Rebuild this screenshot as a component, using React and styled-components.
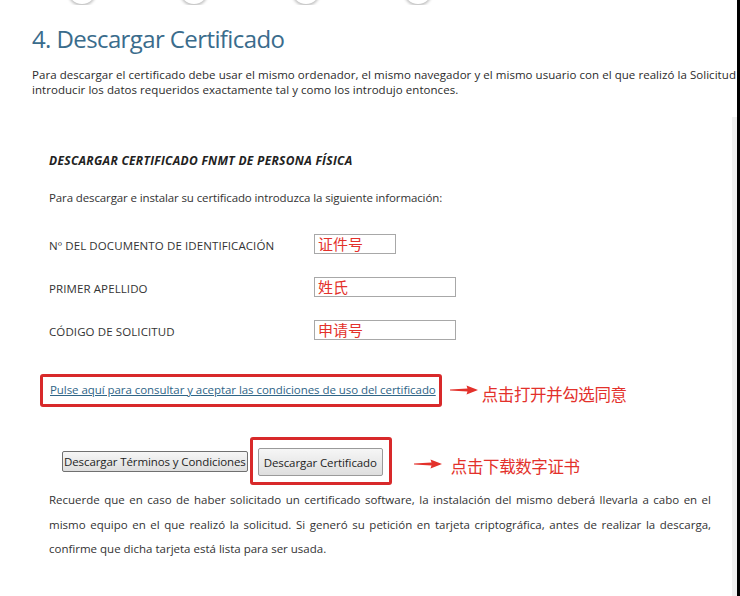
import React from "react";
import styled, { createGlobalStyle } from "styled-components";

const Global = createGlobalStyle`
  html, body { margin: 0; padding: 0; background: #fff; }
  body { font-family: "Open Sans", "Noto Sans", sans-serif; }
`;

const Page = styled.div`
  width: 740px;
  height: 596px;
  overflow: hidden;
  display: flex;
  background: #fff;
`;

const Main = styled.div`
  flex: 1;
  min-width: 0;
  display: flex;
  flex-direction: column;
`;

const Edge = styled.div`
  width: 8px;
  display: flex;
`;
const EdgeLight = styled.div`
  width: 5px;
  margin-top: 117px;
  background: #f0f0f0;
`;
const EdgeDark = styled.div`
  width: 3px;
  background: #000;
`;

const Steps = styled.div`
  display: flex;
  gap: 84px;
  padding-left: 68px;
  height: 5px;
  overflow: hidden;
`;
const StepDot = styled.div`
  width: 28px;
  height: 28px;
  margin-top: -24px;
  border-radius: 50%;
  background: #fff;
  box-shadow: 0 2px 3px rgba(0, 0, 0, 0.25);
`;

const Heading = styled.h1`
  margin: 17px 0 0 32px;
  font-weight: 400;
  font-size: 24px;
  line-height: 34px;
  color: #3a6c8c;
  letter-spacing: -0.6px;
`;

const Intro = styled.p`
  margin: 11px 0 0 32px;
  font-size: 11.5px;
  line-height: 15px;
  color: #2b2b2b;
  white-space: nowrap;
  letter-spacing: 0.05px;
`;

const Form = styled.div`
  margin: 56px 0 0 49px;
  display: flex;
  flex-direction: column;
`;

const SectionTitle = styled.div`
  font-size: 12px;
  font-weight: 700;
  font-style: italic;
  color: #222;
  line-height: 16px;
  letter-spacing: 0.3px;
`;

const Hint = styled.div`
  margin-top: 21px;
  font-size: 11.5px;
  color: #333;
  line-height: 16px;
  letter-spacing: -0.12px;
`;

const Fields = styled.div`
  margin-top: 28px;
  display: grid;
  grid-template-columns: 265px auto;
  row-gap: 23px;
  align-items: center;
`;

const Label = styled.div`
  font-size: 11.5px;
  color: #333;
  letter-spacing: 0.1px;
  padding-top: 3px;
`;

const Input = styled.div`
  width: ${(p) => p.$w}px;
  height: 18px;
  border: 1px solid #a8a8a8;
  background: #fff;
  box-sizing: content-box;
  padding-left: 3px;
  display: flex;
  align-items: center;
  font-family: "Noto Sans CJK SC", sans-serif;
  font-size: 15px;
  color: #e3312b;
  line-height: 18px;
`;

const LinkRow = styled.div`
  margin: 34px 0 0 -9px;
  display: flex;
  align-items: center;
`;

const RedBox = styled.div`
  border: 3px solid #d8292a;
  border-radius: 3px;
  padding: ${(p) => p.$pad};
  margin-left: ${(p) => p.$ml || 0}px;
  display: flex;
  align-items: center;
`;

const Link = styled.a`
  font-size: 11.5px;
  color: #2f6587;
  text-decoration: underline;
  letter-spacing: -0.06px;
  line-height: 16px;
  white-space: nowrap;
`;

const Note = styled.span`
  font-family: "Noto Sans CJK SC", sans-serif;
  font-size: 16.5px;
  color: #e3312b;
  letter-spacing: -0.4px;
  line-height: 20px;
  margin-top: ${(p) => p.$dy || 0}px;
`;

const Arrow = styled.svg`
  display: block;
  flex: none;
  margin: ${(p) => p.$m};
`;

const ButtonRow = styled.div`
  margin: 30px 0 0 13px;
  display: flex;
  align-items: center;
`;

const Button = styled.button`
  font-family: "Open Sans", sans-serif;
  font-size: 11.5px;
  letter-spacing: -0.1px;
  color: #1e1e1e;
  background: linear-gradient(#f6f6f6, #dedede);
  border: 1px solid ${(p) => (p.$big ? "#9a9a9a" : "#707070")};
  border-radius: 2px;
  padding: 0 ${(p) => (p.$big ? 5 : 1)}px;
  height: ${(p) => (p.$big ? 28 : 21)}px;
  white-space: nowrap;
  margin: 0;
`;

const Footer = styled.p`
  margin: 3px 0 0 0;
  width: 662px;
  font-size: 11.5px;
  line-height: 24.5px;
  color: #333;
  text-align: justify;
  letter-spacing: 0;
`;

const RedArrow = ({ m }) => (
  <Arrow $m={m} width="28" height="10" viewBox="0 0 28 10">
    <path d="M0 4.6 L17.5 3.6 L16.5 0.5 L28 5 L16.5 9.5 L17.5 6.4 L0 5.4 Z" fill="#e3312b" />
  </Arrow>
);

export default function App() {
  return (
    <Page>
      <Global />
      <Main>
        <Steps>
          <StepDot />
          <StepDot />
          <StepDot />
          <StepDot />
        </Steps>
        <Heading>4. Descargar Certificado</Heading>
        <Intro>
          Para descargar el certificado debe usar el mismo ordenador, el mismo navegador y el mismo usuario con el que realizó la Solicitud
          <br />
          introducir los datos requeridos exactamente tal y como los introdujo entonces.
        </Intro>
        <Form>
          <SectionTitle>DESCARGAR CERTIFICADO FNMT DE PERSONA FÍSICA</SectionTitle>
          <Hint>Para descargar e instalar su certificado introduzca la siguiente información:</Hint>
          <Fields>
            <Label>Nº DEL DOCUMENTO DE IDENTIFICACIÓN</Label>
            <Input $w={77}>证件号</Input>
            <Label>PRIMER APELLIDO</Label>
            <Input $w={137}>姓氏</Input>
            <Label>CÓDIGO DE SOLICITUD</Label>
            <Input $w={137}>申请号</Input>
          </Fields>
          <LinkRow>
            <RedBox $pad="5px 3px 6px 7px">
              <Link href="#">Pulse aquí para consultar y aceptar las condiciones de uso del certificado</Link>
            </RedBox>
            <RedArrow m="-2px 4px 0 8px" />
            <Note $dy={6}>点击打开并勾选同意</Note>
          </LinkRow>
          <ButtonRow>
            <Button>Descargar Términos y Condiciones</Button>
            <RedBox $pad="8px 6px 6px 5px" $ml={2}>
              <Button $big>Descargar Certificado</Button>
            </RedBox>
            <RedArrow m="6px 9px 0 22px" />
            <Note $dy={10}>点击下载数字证书</Note>
          </ButtonRow>
          <Footer>
            Recuerde que en caso de haber solicitado un certificado software, la instalación del mismo deberá llevarla a cabo en el mismo equipo en el que realizó la solicitud. Si generó su petición en tarjeta criptográfica, antes de realizar la descarga, confirme que dicha tarjeta está lista para ser usada.
          </Footer>
        </Form>
      </Main>
      <Edge>
        <EdgeLight />
        <EdgeDark />
      </Edge>
    </Page>
  );
}
